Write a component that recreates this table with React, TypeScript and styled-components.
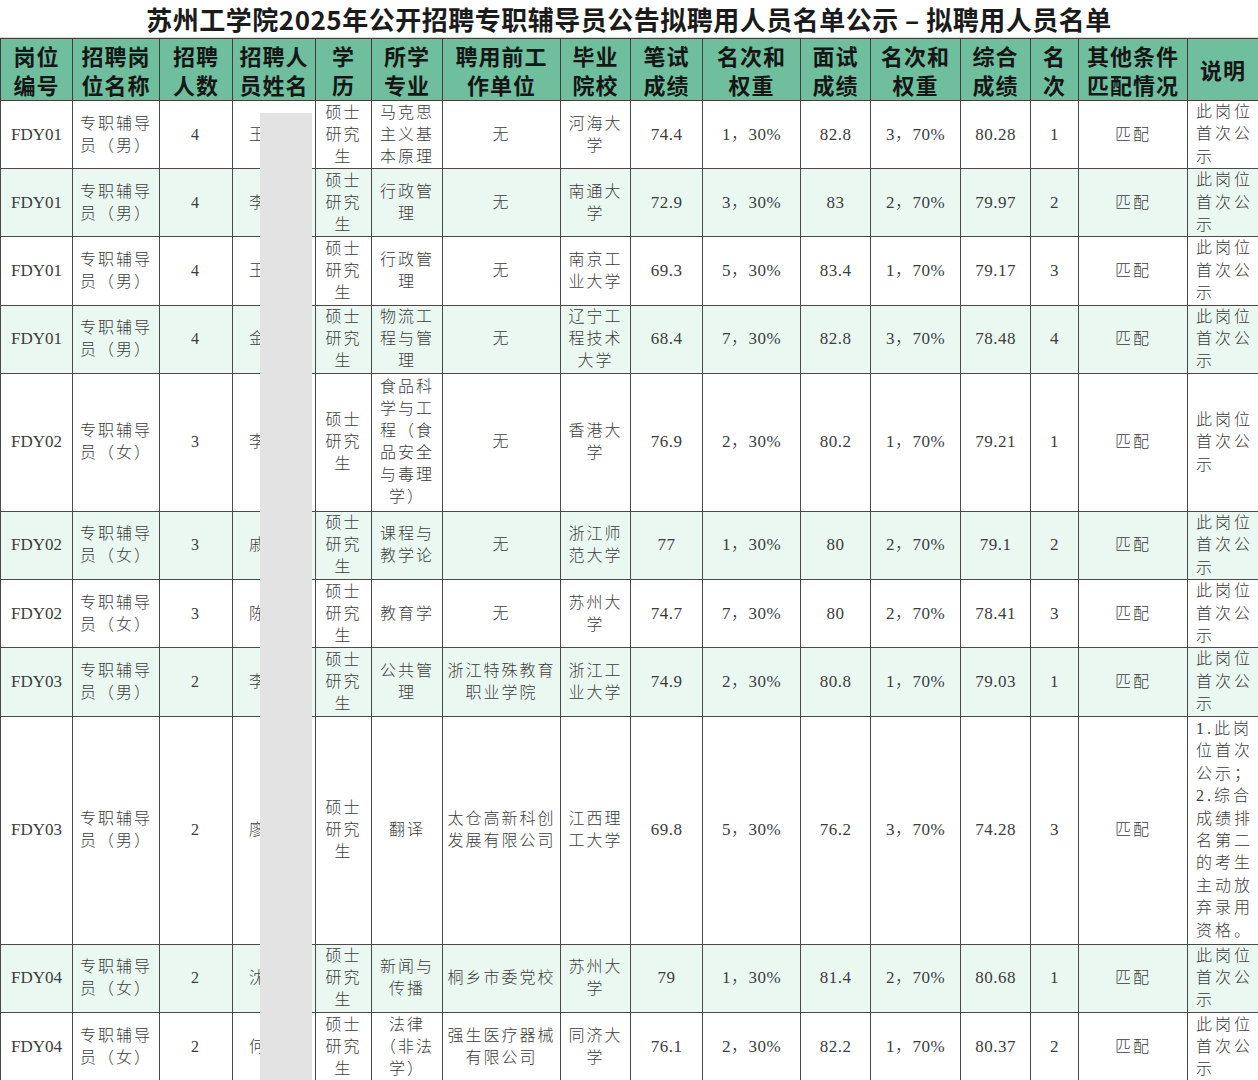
import React from 'react';
import styled, {createGlobalStyle} from "styled-components";

const GlobalStyle = createGlobalStyle`
  html, body {
    margin: 0;
    padding: 0;
    background: #ffffff;
  }
  body {
    font-family: "Liberation Serif", "Noto Sans CJK SC", serif;
  }
`

const colWidths = [72, 87, 73, 83, 56, 71, 118, 70, 72, 98, 70, 90, 70, 48, 109, 71];

const headers = [
    "岗位\n编号", "招聘岗\n位名称", "招聘\n人数", "招聘人\n员姓名", "学\n历", "所学\n专业",
    "聘用前工\n作单位", "毕业\n院校", "笔试\n成绩", "名次和\n权重", "面试\n成绩", "名次和\n权重",
    "综合\n成绩", "名\n次", "其他条件\n匹配情况", "说明"
];

type Row = {
    code: string;
    post: string;
    count: string;
    name: string;
    major: string;
    unit: string;
    school: string;
    written: string;
    wRank: string;
    interview: string;
    iRank: string;
    total: string;
    rank: string;
    note?: string;
    height: number;
};

const male = "专职辅导\n员（男）";
const female = "专职辅导\n员（女）";
const firstNote = "此岗位\n首次公\n示";

const rows: Row[] = [
    {code: "FDY01", post: male, count: "4", name: "王", major: "马克思\n主义基\n本原理", unit: "无", school: "河海大\n学", written: "74.4", wRank: "1，30%", interview: "82.8", iRank: "3，70%", total: "80.28", rank: "1", height: 68},
    {code: "FDY01", post: male, count: "4", name: "李", major: "行政管\n理", unit: "无", school: "南通大\n学", written: "72.9", wRank: "3，30%", interview: "83", iRank: "2，70%", total: "79.97", rank: "2", height: 68},
    {code: "FDY01", post: male, count: "4", name: "王", major: "行政管\n理", unit: "无", school: "南京工\n业大学", written: "69.3", wRank: "5，30%", interview: "83.4", iRank: "1，70%", total: "79.17", rank: "3", height: 68},
    {code: "FDY01", post: male, count: "4", name: "金", major: "物流工\n程与管\n理", unit: "无", school: "辽宁工\n程技术\n大学", written: "68.4", wRank: "7，30%", interview: "82.8", iRank: "3，70%", total: "78.48", rank: "4", height: 68},
    {code: "FDY02", post: female, count: "3", name: "李", major: "食品科\n学与工\n程（食\n品安全\n与毒理\n学）", unit: "无", school: "香港大\n学", written: "76.9", wRank: "2，30%", interview: "80.2", iRank: "1，70%", total: "79.21", rank: "1", height: 138},
    {code: "FDY02", post: female, count: "3", name: "戚", major: "课程与\n教学论", unit: "无", school: "浙江师\n范大学", written: "77", wRank: "1，30%", interview: "80", iRank: "2，70%", total: "79.1", rank: "2", height: 68},
    {code: "FDY02", post: female, count: "3", name: "陈", major: "教育学", unit: "无", school: "苏州大\n学", written: "74.7", wRank: "7，30%", interview: "80", iRank: "2，70%", total: "78.41", rank: "3", height: 68},
    {code: "FDY03", post: male, count: "2", name: "李", major: "公共管\n理", unit: "浙江特殊教育\n职业学院", school: "浙江工\n业大学", written: "74.9", wRank: "2，30%", interview: "80.8", iRank: "1，70%", total: "79.03", rank: "1", height: 68},
    {code: "FDY03", post: male, count: "2", name: "廖", major: "翻译", unit: "太仓高新科创\n发展有限公司", school: "江西理\n工大学", written: "69.8", wRank: "5，30%", interview: "76.2", iRank: "3，70%", total: "74.28", rank: "3", note: "1.此岗\n位首次\n公示；\n2.综合\n成绩排\n名第二\n的考生\n主动放\n弃录用\n资格。", height: 228},
    {code: "FDY04", post: female, count: "2", name: "沈", major: "新闻与\n传播", unit: "桐乡市委党校", school: "苏州大\n学", written: "79", wRank: "1，30%", interview: "81.4", iRank: "2，70%", total: "80.68", rank: "1", height: 68},
    {code: "FDY04", post: female, count: "2", name: "何", major: "法律\n（非法\n学）", unit: "强生医疗器械\n有限公司", school: "同济大\n学", written: "76.1", wRank: "2，30%", interview: "82.2", iRank: "1，70%", total: "80.37", rank: "2", height: 70},
];

export default function App() {
    return (
        <Page>
            <GlobalStyle/>
            <Title>苏州工学院2025年公开招聘专职辅导员公告拟聘用人员名单公示 – 拟聘用人员名单</Title>
            <Table>
                <colgroup>
                    {colWidths.map((w, i) => <col key={i} style={{width: w}}/>)}
                </colgroup>
                <thead>
                <tr>
                    {headers.map((h, i) => <HeadCell key={i}>{h}</HeadCell>)}
                </tr>
                </thead>
                <tbody>
                {rows.map((r, i) => (
                    <BodyRow key={i} $shaded={i % 2 === 1} style={{height: r.height}}>
                        <CodeCell>{r.code}</CodeCell>
                        <Cell>{r.post}</Cell>
                        <Cell>{r.count}</Cell>
                        <NameCell>{r.name}</NameCell>
                        <Cell>硕士{"\n"}研究{"\n"}生</Cell>
                        <Cell>{r.major}</Cell>
                        <Cell>{r.unit}</Cell>
                        <Cell>{r.school}</Cell>
                        <NumCell>{r.written}</NumCell>
                        <NumCell>{r.wRank}</NumCell>
                        <NumCell>{r.interview}</NumCell>
                        <NumCell>{r.iRank}</NumCell>
                        <NumCell>{r.total}</NumCell>
                        <NumCell>{r.rank}</NumCell>
                        <Cell>匹配</Cell>
                        <NoteCell>{r.note ?? firstNote}</NoteCell>
                    </BodyRow>
                ))}
                </tbody>
            </Table>
            <NameMask/>
        </Page>
    );
}

const Page = styled.div`
  position: relative;
  width: 1258px;
  height: 1080px;
  overflow: hidden;
  background: #ffffff;
`
const Title = styled.div`
  height: 38px;
  line-height: 38px;
  text-align: center;
  font-family: "Noto Sans CJK SC", sans-serif;
  font-size: 26px;
  font-weight: 700;
  color: #1b1b1b;
  letter-spacing: 0.5px;
  border-bottom: 1px solid #d8d8d8;
  box-sizing: border-box;
`
const Table = styled.table`
  width: 1258px;
  table-layout: fixed;
  border-collapse: collapse;
  border-top: 1px solid #444;
`
const HeadCell = styled.th`
  height: 61px;
  padding: 0;
  background-color: #6fbe9e;
  border: 1px solid #3f3f3f;
  font-family: "Noto Sans CJK SC", sans-serif;
  font-size: 22px;
  font-weight: 700;
  line-height: 29px;
  letter-spacing: 1px;
  color: #161616;
  white-space: pre-line;
  text-align: center;
  vertical-align: middle;
`
const BodyRow = styled.tr<{ $shaded: boolean }>`
  background-color: ${({$shaded}) => $shaded ? "#ebf8f2" : "#ffffff"};
`
const Cell = styled.td`
  padding: 0;
  border: 1px solid #4a4a4a;
  font-family: "Liberation Serif", "Noto Sans CJK SC", serif;
  font-size: 16px;
  font-weight: 300;
  line-height: 22px;
  letter-spacing: 2px;
  color: #3c3c3c;
  text-align: center;
  vertical-align: middle;
  white-space: pre-line;
  overflow: visible;
`
const CodeCell = styled(Cell)`
  font-size: 17px;
  letter-spacing: 0;
`
const NumCell = styled(Cell)`
  font-size: 17px;
  letter-spacing: 0.5px;
`
const NameCell = styled(Cell)`
  text-align: left;
  padding-left: 16px;
`
const NoteCell = styled(Cell)`
  text-align: left;
  padding-left: 8px;
  letter-spacing: 3px;
  line-height: 22.4px;
`
const NameMask = styled.div`
  position: absolute;
  left: 260px;
  top: 113px;
  width: 52px;
  bottom: 0;
  background-color: #e3e3e3;
`
